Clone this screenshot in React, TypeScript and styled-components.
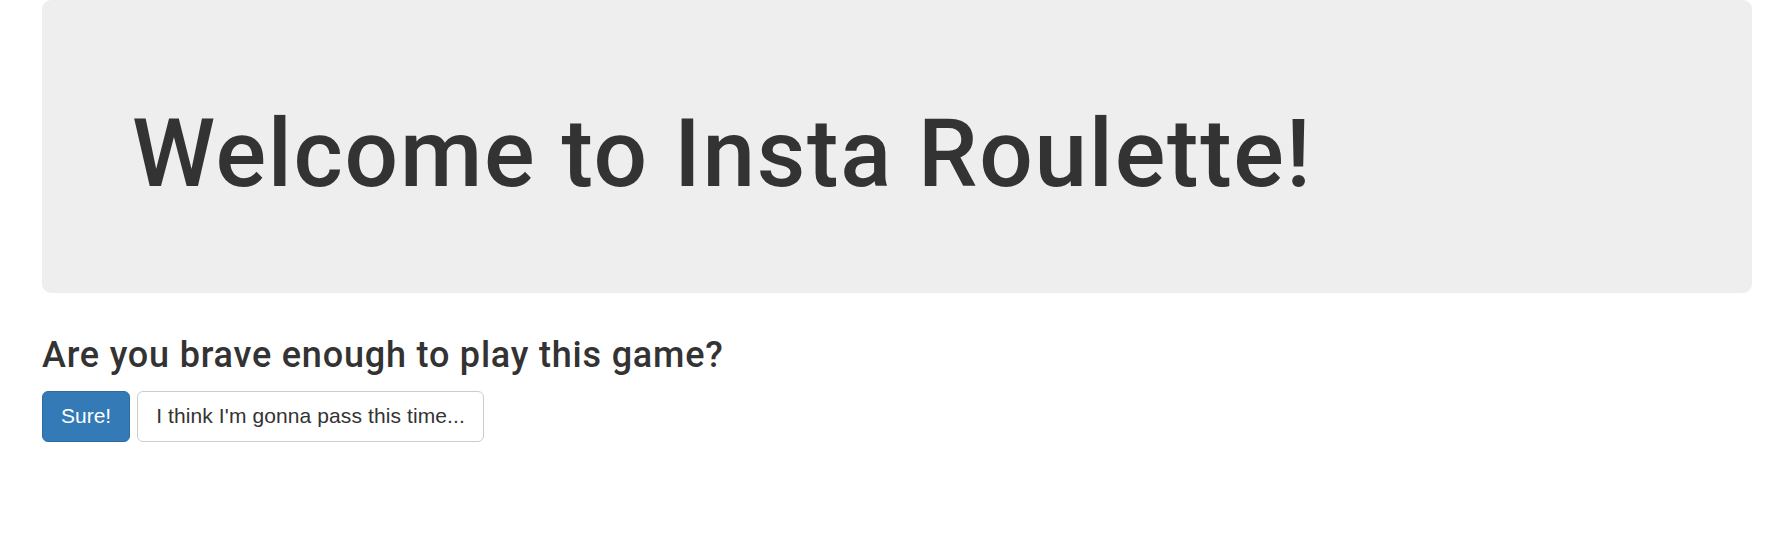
import React from "react";
import styled, { createGlobalStyle } from "styled-components";

const GlobalStyle = createGlobalStyle`
  html, body { margin: 0; padding: 0; background: #fff; }
  body {
    font-family: "Liberation Sans", Arial, sans-serif;
    font-size: 21px;
    line-height: 1.42857;
    color: #333;
  }
  * { box-sizing: border-box; }
`;

const Page = styled.div`
  padding: 0 40px 0 42px;
`;

const Jumbotron = styled.div`
  background: #eeeeee;
  border-radius: 9px;
  padding: 72px 90px;
  margin-bottom: 43px;
`;

const Title = styled.h1`
  margin: 30px 0 15px;
  font-family: Roboto, "Liberation Sans", sans-serif;
  font-size: 94.5px;
  line-height: 1.1;
  font-weight: 500;
  letter-spacing: 1.7px;
  color: #333;
`;

const Question = styled.h3`
  margin: 0 0 15px;
  font-family: Roboto, "Liberation Sans", sans-serif;
  font-size: 36px;
  line-height: 1.1;
  font-weight: 500;
  letter-spacing: 0.8px;
  color: #333;
`;

const Actions = styled.div`
  display: flex;
  gap: 7px;
`;

const Button = styled.button<{ $primary?: boolean }>`
  font-family: "Liberation Sans", Arial, sans-serif;
  font-size: 21px;
  line-height: 1.42857;
  letter-spacing: ${(p) => (p.$primary ? "0" : "0.1px")};
  height: 51px;
  padding: 9px 18px;
  border-radius: 6px;
  border: 1.5px solid ${(p) => (p.$primary ? "#2e6da4" : "#ccc")};
  background: ${(p) => (p.$primary ? "#337ab7" : "#fff")};
  color: ${(p) => (p.$primary ? "#fff" : "#333")};
  cursor: pointer;
  white-space: nowrap;
`;

export default function App() {
  return (
    <>
      <GlobalStyle />
      <Page>
        <Jumbotron>
          <Title>Welcome to Insta Roulette!</Title>
        </Jumbotron>
        <Question>Are you brave enough to play this game?</Question>
        <Actions>
          <Button $primary>Sure!</Button>
          <Button>I think I'm gonna pass this time...</Button>
        </Actions>
      </Page>
    </>
  );
}
